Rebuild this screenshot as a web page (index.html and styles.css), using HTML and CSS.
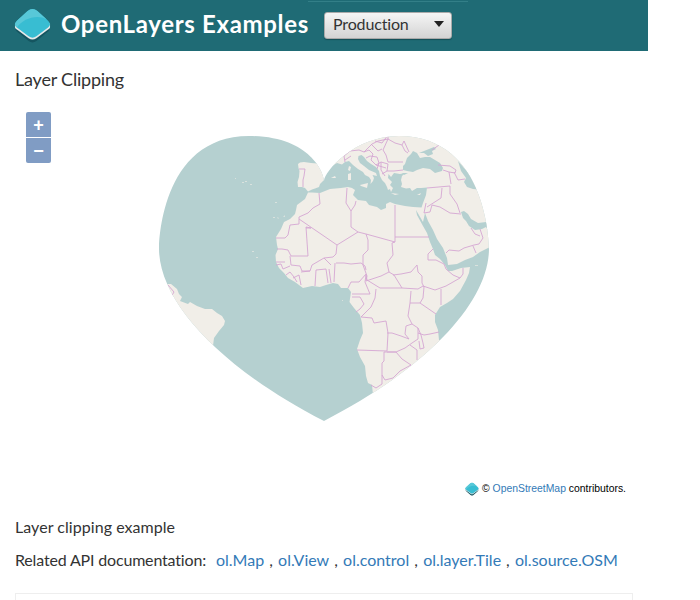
FILE: index.html
```html
<!DOCTYPE html>
<html lang="en">
<head>
<meta charset="utf-8">
<title>Layer Clipping</title>
<link rel="stylesheet" href="styles.css">
</head>
<body>
<svg class="defs" width="0" height="0">
  <defs>
    <symbol id="logo" viewBox="0 0 38 38">
      <path d="M2 20Q0 23 4 26L15 35Q19 38 23 35L34 26Q38 23 36 20Z" fill="#155560"/>
      <path d="M1 17V21Q1 22 4 24L15 32Q19 35 23 32L34 24Q37 22 37 21V17Z" fill="#e6e9e9"/>
      <path d="M3 14L14 4Q19 0 24 4L35 14Q39 18 35 21L23 30Q19 33 15 30L3 21Q-1 18 3 14Z" fill="#38bdd2"/>
      <path d="M3 14L14 4Q19 0 24 4L34 13C24 7 9 12 3 21Q-1 18 3 14Z" fill="#58c8d8"/>
    </symbol>
  </defs>
</svg>
<header class="navbar">
  <svg class="logo"><use href="#logo"/></svg>
  <a class="brand">OpenLayers Examples</a>
  <div class="build"><span>Production</span><i class="caret"></i></div>
</header>
<main class="content">
  <h4 class="title">Layer Clipping</h4>
  <div class="map">
    <svg class="canvas" viewBox="15 101 618 400">
      <defs>
        <clipPath id="heart"><path transform="translate(99 61) scale(3)" d="M75 40C75 37 70 25 50 25C20 25 20 62.5 20 62.5C20 80 40 102 75 120C110 102 130 80 130 62.5C130 62.5 130 25 100 25C85 25 75 37 75 40Z"/></clipPath>
      </defs>
      <g clip-path="url(#heart)">
        <rect x="150" y="130" width="350" height="300" fill="#b5d0d0"/>
        <g fill="#f1eee8">
          <path d="M298 164L300 162.5L304 162L311 163L317 163.5L324 165V180L320 184L319 187L315 188.5L312 189.5L308 191.5L305 188L302 187L298 187L297.500 182L299 177L299.500 171L298.500 168Z"/>
          <path d="M324 130V166L332 166L337 163L342 164.500L345 162L349 161L353 165L358 169L363 172L365 175L369 177L371 180L370.500 184L373 181L374 178L372.500 175L377 176L376 173L369 170L364 166L360 163L358 159L358.500 156L361.500 155L364 157L367 161L371 164L376 167L379 171L380 176L382 180L385 183L387 187L388 190L390 189L391 192L393 188L390 185L392 182L388 178L388.500 174L391 177L394 173L400 174L405 173L402 176L401 180L402 184L401 187L406 188.500L410 188L412 191L417 188L421 188L427 187.500L426 195L423 203L421.500 207.500L413 207L405 206L395 204L390 202L386 204L386 208L381 210L377 207L369 205L366 201L358 200L353 195L355 190L352 188L348 187L341 188L330 189L320 193L312 192.500L308 192.500L305 199L297 205L296 210L295 214L290 219L284 222L281 229L276 237L277 245L278 249L275.500 255L276 262L279 268L284 273L288 278L295 282L303 288L312 286L320 287L326 285L333 283L338 284L341 288L348 288L351 292L349.500 302L354 308L360 315L362 323L363 333L360 340L357 349L360 357L365 366L366 376L368 383L372 385L373 395L400 430L500 430V350L439 340L438 330L435 322L435 315L440 307L447 303L453 299L460 291L466 280L469 273L470 267L461 268L452 271L448 271L445 265L440 259L435 255L433 249L430 242L427 233L423 226L417 215L416 210L423 222L425 213L428 221L433 230L437 239L443 248L447 258L448 265L457 264L465 260L473 257L480 252L490 247L500 240V100Z"/>
          <path d="M160 283L167 284L171 284L177 289L179 294L182 297L180 301L188 304L190 302L197 306L205 309L212 309L217 313L222 316L225 321L224 325L219 331L214 338L213 346L150 360Z"/>
          <path d="M349 166L351 167L350 171L348 170ZM348 174L351 173L351 180L348 180ZM360 185L368 183L367 188L361 186ZM391 193L399 194L395 195ZM417 195L421 193L420 195ZM331 178L335 176L336 178Z"/>
          <path opacity=".6" d="M235 178h1v1h-1zM242 182h2v1h-2zM245 181h2v1h-2zM250 184h2v1h-2zM275 202h2v1h-2zM273 217h2v1h-2zM277 217l2 1l-1 1zM283 217l2-2v2zM252 251h2v1h-2zM256 257h2v1h-2zM475 265h3v1h-3zM342 300h1v1h-1z"/>
        </g>
        <g fill="#b5d0d0">
          <path d="M403 170L403 166L405 164L407 158L411 154L413 151L417 153L420 158L425 157L430 157L435 160L440 163L443 168L442 171L435 173L430 169L423 168L417 170L413 172L407 171ZM419 153L424 151L434 147L436 149L432 151L433 154L428 156L424 153ZM402 173L408 173L404 175Z"/>
          <path d="M458 161L464 168L470 174L483 190L473 189L467 187L464 182L466 178L461 171ZM461 212L464 211L468 214L471 219L478 223L486 222L490 218V234L486 227L482 229L475 230L469 226L466 221L463 218Z"/>
        </g>
        <path class="borders" d="M299 169L305 169L304 176L303 180L303 187M319 193L320 204L313 208L308 213L299 217V224L290 225L288 235L285 238H276M299 219L337 245L358 232L351 227V211L346 203L347 188M351 211L355 205L356 201M395 205V237M358 232L366 234L395 242V237H429M395 242L392 243L393 255L387 263L389 272L394 275L402 288M366 234L368 240L368 250L363 255L363 265L367 276L366 281L372 279L381 276L389 272M306 228H311L306 227L308 256H291L288 250L282 249H277M337 245L336 254L333 257L324 258L312 265L310 271L302 271L300 266L291 265L290 256M276 262H285M276 265L281 264L283 269L290 266M286 275L290 272L294 277L297 282M293 278L299 275L301 285M310 271L301 272M315 286L316 270L326 269L328 283M329 269L331 283M335 263L334 282M336 263L344 263L351 264L361 263L365 266L366 270M366 274L359 282L351 282L348 288M324 258L331 265M352 294H370L365 282L366 275L367 280L380 288L402 288L418 289L423 286L435 290L446 286L460 278L453 275L446 269L444 264L436 260L428 260V254L433 249M352 297H360L364 304L360 309L356 312M376 289L375 298L371 307L361 317L372 318L374 323L386 321L388 333L387 351L357 350M393 275L401 274L411 272L417 265L418 272L422 276L422 283L424 287L423 298L420 303H410L411 291M441 289V305M460 278L463 274V268M420 303L436 314M410 303L408 316L412 324L406 326L405 334L409 339L401 336L392 333H387M412 324L418 328L418 339L412 343L405 348L396 352H387M418 328L421 335L423 343L424 348L420 349L419 341M418 333L424 335L430 334L439 332M396 352L402 359L411 365L400 371L393 378L385 380L382 375V363L384 361V352L396 352M410 345L417 350V360M382 375V384L376 388L371 385M427 188L450 186L450 194L457 204L460 213M442 188L441 198L427 207M426 203L424 213L430 212L432 205L440 207L450 213L461 214M446 253L449 250L459 251L464 248L474 245L479 244L483 238L480 229M473 246L476 253M471 228L475 234L480 236M438 165L450 166L456 170L455 173L449 172L443 170M449 172L451 184M454 172L458 180L465 179M351 156L345 160M345 162L344 156L350 151L359 150L364 152L369 150L373 154L371 160L376 165L381 162L388 164L387 171L382 174M364 152L372 144L378 141L388 139L395 143L402 145L405 151L408 153M388 139V132M388 139L383 150L386 155L388 162L403 162M387 171L394 171L403 170M366 158L370 156L377 157L379 163L377 169M371 144L378 151L382 149M402 145L404 141L409 152M432 150L439 145M381 162V170L385 176M168 285L174 292L171 297M375 141L382 143L388 135M376 165L386 168"/>
      </g>
    </svg>
    <div class="zoom"><button>+</button><button>−</button></div>
    <div class="attribution"><svg><use href="#logo"/></svg><span>© <a>OpenStreetMap</a> contributors.</span></div>
  </div>
  <p class="description">Layer clipping example</p>
  <div class="docs"><span class="docs-label">Related API documentation:</span><ul><li><a>ol.Map</a></li><li><a>ol.View</a></li><li><a>ol.control</a></li><li><a>ol.layer.Tile</a></li><li><a>ol.source.OSM</a></li></ul></div>
  <div class="source"></div>
</main>
</body>
</html>
```
FILE: styles.css
```css
* { box-sizing: border-box; }
html { overflow: hidden; }
body { margin: 0; width: 648px; height: 600px; overflow: hidden; background: #fff; color: #333; font: 16px/22px Lato, sans-serif; font-variant-ligatures: none; }
.defs { display: block; height: 0; }
.navbar { height: 51px; display: flex; align-items: center; padding-left: 14px; background: linear-gradient(#337f88, #337f88) 308px 1px / 160px 1px no-repeat #1f6b75; }
.logo { width: 37px; height: 37px; flex: none; }
.brand { width: 273px; padding: 0 0 4px 10px; color: #fff; font-size: 24px; line-height: 30px; font-weight: 700; letter-spacing: .67px; white-space: nowrap; }
.build { width: 128px; height: 27px; margin-top: -1px; padding: 0 7px 2px 8px; display: flex; align-items: center; justify-content: space-between; border: 1px solid #aaa; border-radius: 3px; background: linear-gradient(#f5f5f5, #d4d4d4); box-shadow: 0 1px 1px #164f57; letter-spacing: -.15px; }
.caret { border: 5px solid transparent; border-top: 6px solid #222; border-bottom: 0; }
.content { padding: 0 15px; }
.title { margin: 0; padding-top: 17px; height: 50px; font-size: 18px; font-weight: 400; letter-spacing: -.2px; }
.map { position: relative; height: 400px; }
.canvas { display: block; width: 618px; height: 400px; }
.borders { fill: none; stroke: #d5a6d2; stroke-width: .9; stroke-linejoin: round; }
.zoom { position: absolute; left: 11px; top: 11px; display: grid; gap: 1px; }
.zoom button { width: 25px; height: 25px; padding: 1px 0 0; border: 0; background: #809cc4; color: #fff; font: bold 18px/24px "Liberation Sans", sans-serif; border-radius: 0 0 2px 2px; }
.zoom button:first-child { border-radius: 2px 2px 0 0; }
.attribution { position: absolute; right: 7px; bottom: 4px; display: flex; align-items: center; gap: 3px; font: 10.4px/16px "Liberation Sans", sans-serif; color: #000; white-space: nowrap; }
.attribution svg { width: 14px; height: 14px; }
a { color: #337ab7; }
.description { margin: 0; padding-top: 15px; height: 48px; letter-spacing: .05px; }
.docs { display: flex; height: 44px; white-space: nowrap; }
.docs-label { width: 201px; letter-spacing: -.17px; }
.docs ul { display: flex; margin: 0; padding: 0; list-style: none; }
.docs li:not(:last-child)::after { content: ","; margin: 0 5.3px 0 5px; }
.source { height: 20px; border: 1px solid #eee; }
```
